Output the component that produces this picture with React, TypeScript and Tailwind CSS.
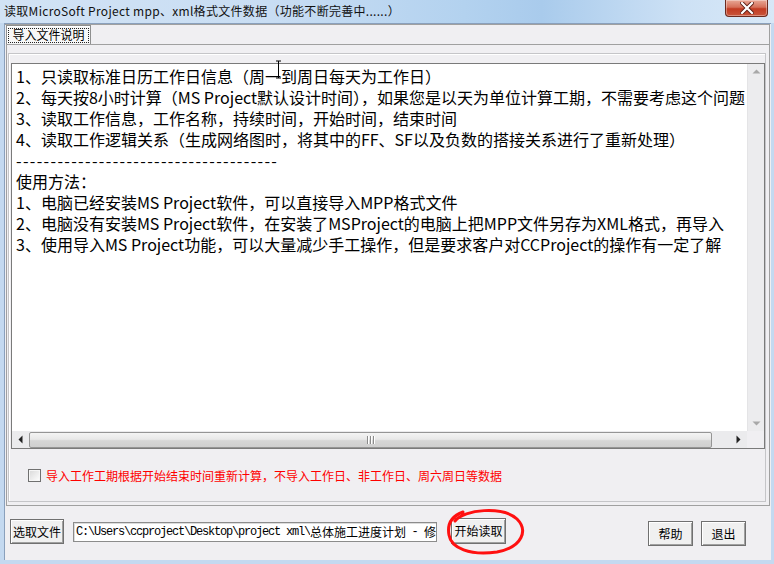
import React from "react";

const lines = [
  "1、只读取标准日历工作日信息（周一到周日每天为工作日）",
  "2、每天按8小时计算（MS Project默认设计时间），如果您是以天为单位计算工期，不需要考虑这个问题",
  "3、读取工作信息，工作名称，持续时间，开始时间，结束时间",
  "4、读取工作逻辑关系（生成网络图时，将其中的FF、SF以及负数的搭接关系进行了重新处理）",
  "--------------------------------------",
  "使用方法：",
  "1、电脑已经安装MS Project软件，可以直接导入MPP格式文件",
  "2、电脑没有安装MS Project软件，在安装了MSProject的电脑上把MPP文件另存为XML格式，再导入",
  "3、使用导入MS Project功能，可以大量减少手工操作，但是要求客户对CCProject的操作有一定了解",
];

function ClassicButton({ label, className }: { label: string; className: string }) {
  return (
    <div
      className={
        "flex items-center justify-center bg-[#f0f0f0] border border-[#707070] shadow-[inset_1px_1px_#ffffff,inset_-1px_-1px_#a0a0a0] text-[12px] text-black leading-none " +
        className
      }
    >
      {label}
    </div>
  );
}

export default function App() {
  return (
    <div className="relative w-[774px] h-[564px] flex flex-col overflow-hidden bg-[#c4d9f0] font-['Noto_Sans_CJK_SC',sans-serif]">
      {/* Title bar */}
      <div className="relative h-[23px] shrink-0 flex items-center pl-[4px] text-[12px] text-[#111] bg-[linear-gradient(to_right,#d2e3f5,#c8ddf3_35%,#b3d2ef_60%,#a9cbec_70%,#cde1f5_88%,#d8e8f7)]">
        <span className="leading-none -mt-[1px] tracking-[0.3px]">读取MicroSoft Project mpp、xml格式文件数据（功能不断完善中......）</span>
        <div className="absolute right-[6px] top-0 w-[43px] h-[17px] rounded-b-[4px] border border-t-0 border-[#6b2a1f] bg-[linear-gradient(to_bottom,#e8a896,#d6705a_45%,#c23b22_55%,#c9563c)] flex items-center justify-center shadow-[inset_0_0_0_1px_rgba(255,255,255,0.35)]">
          <svg width="14" height="12" viewBox="0 0 14 12">
            <path d="M2 1 L12 11 M12 1 L2 11" stroke="#5a1d14" strokeWidth="4" strokeLinecap="square" />
            <path d="M2 1 L12 11 M12 1 L2 11" stroke="#ffffff" strokeWidth="2.2" strokeLinecap="square" />
          </svg>
        </div>
      </div>

      {/* Client area */}
      <div className="ml-[4px] mr-[3px] h-[537px] shrink-0 flex flex-col bg-[#f0eff2] border-l border-t border-[#8aa0bc]">
        {/* Tab control */}
        <div className="h-[482px] mr-[1px] flex flex-col border-t border-r border-[#a0a0a0]">
          {/* tab header */}
          <div className="h-[19px] shrink-0 flex items-end pl-[1px]">
            <div className="h-[19px] w-[85px] bg-[#f7f7f7] border border-b-0 border-[#8e8f8f] shadow-[inset_1px_1px_#ffffff] flex items-center justify-center">
              <span className="border border-dotted border-[#222] h-[15px] w-[81px] flex items-center justify-center text-[12px] leading-none text-black">
                导入文件说明
              </span>
            </div>
          </div>
          {/* tab panel */}
          <div className="flex-1 flex flex-col border-t border-l border-b border-[#a0a0a0] ml-[1px] bg-[#f0eff2] pt-[8px] pr-[3px] pb-[3px] pl-[1px]">
            <div className="flex-1 flex flex-col border border-[#c5c5c8] shadow-[inset_1px_1px_#ffffff]">
              {/* memo */}
              <div className="mt-[9px] ml-[2px] h-[386px] shrink-0 flex flex-col bg-white border border-[#7a7a7a]">
                <div className="flex flex-1 min-h-0">
                  <div className="flex-1 overflow-hidden whitespace-pre pl-[4px] pt-[2px] text-[16px] leading-[21px] text-black">
                    {lines.map((l, i) => (
                      <div key={i} className={i === 4 ? "tracking-[1.35px]" : ""}>
                        {l}
                      </div>
                    ))}
                  </div>
                  {/* vertical scrollbar */}
                  <div className="w-[17px] shrink-0 flex flex-col items-center justify-between bg-[#ececee] border-l border-[#e4e4e6] py-[5px]">
                    <svg width="9" height="5" viewBox="0 0 9 5">
                      <path d="M0.5 4.5 L4.5 0.5 L8.5 4.5 Z" fill="#a8a8a8" />
                    </svg>
                    <svg width="9" height="5" viewBox="0 0 9 5">
                      <path d="M0.5 0.5 L4.5 4.5 L8.5 0.5 Z" fill="#a8a8a8" />
                    </svg>
                  </div>
                </div>
                {/* horizontal scrollbar */}
                <div className="h-[17px] shrink-0 flex">
                  <div className="flex-1 flex items-center bg-[#ebebed]">
                    <div className="w-[17px] h-full flex items-center justify-center">
                      <svg width="5" height="9" viewBox="0 0 5 9">
                        <path d="M4.5 0.5 L0.5 4.5 L4.5 8.5 Z" fill="#222" />
                      </svg>
                    </div>
                    <div className="w-[683px] h-[16px] rounded-[2px] border border-[#959595] bg-[linear-gradient(to_bottom,#f4f4f4,#e8e8e8_45%,#d6d6d6_55%,#cfcfcf)] flex items-center justify-center">
                      <div className="flex gap-[1px]">
                        <div className="w-[2px] h-[8px] bg-[#8a8a8a] border-r border-white" />
                        <div className="w-[2px] h-[8px] bg-[#8a8a8a] border-r border-white" />
                        <div className="w-[2px] h-[8px] bg-[#8a8a8a] border-r border-white" />
                      </div>
                    </div>
                    <div className="flex-1" />
                    <div className="w-[17px] h-full flex items-center justify-center">
                      <svg width="5" height="9" viewBox="0 0 5 9">
                        <path d="M0.5 0.5 L4.5 4.5 L0.5 8.5 Z" fill="#222" />
                      </svg>
                    </div>
                  </div>
                  <div className="w-[17px] shrink-0 bg-[#f0eff2]" />
                </div>
              </div>
              {/* checkbox row */}
              <div className="mt-[20px] ml-[19px] flex items-center gap-[5px]">
                <div className="w-[13px] h-[13px] border border-[#707070] bg-[linear-gradient(135deg,#d8d8d8,#ffffff)] shadow-[inset_0_0_0_1px_#f6f6f6]" />
                <span className="text-[12px] leading-none text-[#ff0000]">
                  导入工作工期根据开始结束时间重新计算，不导入工作日、非工作日、周六周日等数据
                </span>
              </div>
            </div>
          </div>
        </div>

        {/* Bottom row */}
        <div className="flex-1 flex items-start">
          <ClassicButton label="选取文件" className="ml-[5px] mt-[13px] w-[54px] h-[25px]" />
          <div className="ml-[9px] mt-[16px] w-[364px] h-[20px] bg-white border border-[#8c8c8c] shadow-[inset_1px_1px_#dcdcdc] flex items-center pl-[2px] overflow-hidden whitespace-nowrap text-[12px] leading-none text-black">
            <span className="inline-block w-[234px] shrink-0 overflow-hidden font-['Liberation_Mono',monospace] tracking-[-1.2px]">
              {"C:\\Users\\ccproject\\Desktop\\project xml\\"}
            </span>
            <span className="inline-block w-[96px] shrink-0">总体施工进度计划</span>
            <span className="inline-block w-[18px] shrink-0 text-center font-['Liberation_Mono',monospace]">-</span>
            <span className="inline-block shrink-0">修</span>
          </div>
          <ClassicButton label="开始读取" className="ml-[14px] mt-[12px] w-[55px] h-[26px]" />
          <div className="flex-1" />
          <ClassicButton label="帮助" className="mt-[15px] w-[45px] h-[25px]" />
          <ClassicButton label="退出" className="ml-[8px] mr-[25px] mt-[15px] w-[45px] h-[25px]" />
        </div>
      </div>

      {/* I-beam cursor */}
      <svg className="absolute left-[274px] top-[60px]" width="9" height="19" viewBox="0 0 9 19">
        <path d="M2 1 H7 M4.5 1 V18 M2 18 H7" stroke="#000" strokeWidth="1" />
      </svg>

      {/* red annotation ellipse */}
      <svg className="absolute left-0 top-0 pointer-events-none" width="774" height="564" viewBox="0 0 774 564">
        <path
          d="M455 521 C464 509, 503 506, 517 519 C528 530, 523 547, 497 552 C470 556, 451 548, 449 535 C447 524, 452 516, 463 512"
          fill="none"
          stroke="#ff1010"
          strokeWidth="3"
          strokeLinecap="round"
        />
      </svg>
    </div>
  );
}
